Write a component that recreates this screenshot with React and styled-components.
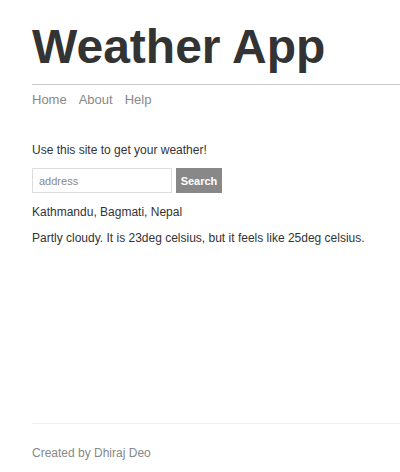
import React from "react";
import styled, { createGlobalStyle } from "styled-components";

const Global = createGlobalStyle`
  html, body { margin: 0; padding: 0; background: #fff; }
  body { font-family: "Liberation Sans", Arial, sans-serif; color: #333; }
  * { box-sizing: border-box; }
`;

const Page = styled.div`
  min-height: 100vh;
  display: flex;
  flex-direction: column;
  padding-left: 32px;
`;

const Header = styled.header`
  padding-top: 19px;
`;

const Title = styled.h1`
  margin: 0;
  font-size: 48px;
  line-height: 55px;
  font-weight: 700;
  color: #333;
  padding-bottom: 10px;
  border-bottom: 1px solid #ccc;
`;

const Nav = styled.nav`
  display: flex;
  gap: 12px;
  padding-top: 7px;
`;

const NavLink = styled.a`
  font-size: 13px;
  line-height: 16px;
  color: #888;
  text-decoration: none;
`;

const Main = styled.main`
  flex: 1;
  padding-top: 35px;
`;

const Text = styled.p`
  margin: 0 0 ${(p) => p.$mb || 0}px;
  font-size: 12px;
  line-height: 14px;
  color: #333;
`;

const Form = styled.form`
  display: flex;
  gap: 4px;
  margin-bottom: 12px;
`;

const Input = styled.input`
  width: 140px;
  height: 25px;
  border: 1px solid #ddd;
  padding: 0 6px;
  font-family: "Liberation Sans", Arial, sans-serif;
  font-size: 11px;
  color: #333;
  outline: none;
  &::placeholder { color: #888; }
`;

const Button = styled.button`
  width: 46px;
  height: 25px;
  border: none;
  background: #888;
  color: #fff;
  font-family: "Liberation Sans", Arial, sans-serif;
  font-size: 11px;
  font-weight: 700;
  padding: 0;
  cursor: pointer;
`;

const Footer = styled.footer`
  border-top: 1px solid #eee;
  padding: 22px 0 12px;
`;

const FooterText = styled.p`
  margin: 0;
  font-size: 12px;
  line-height: 14px;
  color: #888;
`;

export default function App() {
  return (
    <>
      <Global />
      <Page>
        <Header>
          <Title>Weather App</Title>
          <Nav>
            <NavLink href="#">Home</NavLink>
            <NavLink href="#">About</NavLink>
            <NavLink href="#">Help</NavLink>
          </Nav>
        </Header>
        <Main>
          <Text $mb={11}>Use this site to get your weather!</Text>
          <Form onSubmit={(e) => e.preventDefault()}>
            <Input placeholder="address" />
            <Button type="submit">Search</Button>
          </Form>
          <Text $mb={12}>Kathmandu, Bagmati, Nepal</Text>
          <Text>Partly cloudy. It is 23deg celsius, but it feels like 25deg celsius.</Text>
        </Main>
        <Footer>
          <FooterText>Created by Dhiraj Deo</FooterText>
        </Footer>
      </Page>
    </>
  );
}
